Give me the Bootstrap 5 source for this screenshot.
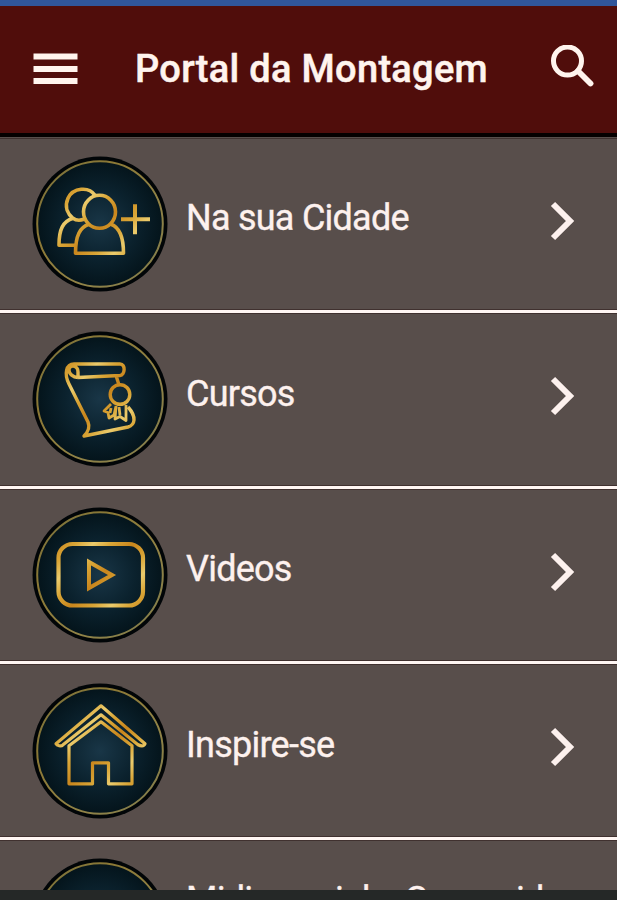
<!DOCTYPE html>
<html lang="pt-BR">
<head>
<meta charset="utf-8">
<meta name="viewport" content="width=device-width, initial-scale=1">
<title>Portal da Montagem</title>
<link href="https://cdn.jsdelivr.net/npm/bootstrap@5.3.0/dist/css/bootstrap.min.css" rel="stylesheet">
<style>
body { background: #584e4b; font-family: Roboto, sans-serif; color: #fdf1ee; }
.app-shell { height: 900px; }
.status-strip { height: 6px; background: #30569b; }
.app-bar { height: 131px; background: #500d0b; border-bottom: 4px solid #050000; padding: 0 23px 4px 33px; }
.app-title { font-size: 38px; font-weight: 500; line-height: 44px; letter-spacing: .3px; color: #fff4ee; margin: 2px 0 0 57px; white-space: nowrap; -webkit-text-stroke: .5px #fff4ee; }
.menu-list { --bs-list-group-bg: #584e4b; --bs-list-group-color: #fdf1ee; padding-top: .5px; }
.menu-list > .menu-entry { height: 175.6px; padding: 0 41px 0 32px; border: 0; border-bottom: 3px solid #fff6f3; box-shadow: inset 0 -1px #40312f, inset 0 1px #40312f; }
.menu-entry .entry-label { font-size: 36px; line-height: 44px; margin: 58.6px 0 0 18px; letter-spacing: -.75px; white-space: nowrap; -webkit-text-stroke: .35px #fdf1ee; }
.menu-entry .label-two-line { margin-top: 38px; }
.entry-icon { width: 136px; height: 136px; margin-top: 18.4px; }
.entry-arrow { width: 26px; height: 42px; margin-top: 62.2px; }
.bottom-strip { height: 10px; background: #252827; }
</style>
</head>
<body>
<svg width="0" height="0" class="position-absolute" aria-hidden="true">
  <defs>
    <radialGradient id="night"><stop offset="0" stop-color="#193647"/><stop offset=".55" stop-color="#0b222e"/><stop offset="1" stop-color="#04141b"/></radialGradient>
    <linearGradient id="gold" gradientUnits="userSpaceOnUse" x1="28" y1="30" x2="48" y2="50" spreadMethod="reflect"><stop offset="0" stop-color="#c9861d"/><stop offset=".55" stop-color="#d9a536"/><stop offset="1" stop-color="#ebcb6c"/></linearGradient>
    <linearGradient id="ring" x1="0" y1="0" x2="1" y2="1"><stop offset="0" stop-color="#77713e"/><stop offset=".3" stop-color="#8b7835"/><stop offset=".65" stop-color="#918347"/><stop offset="1" stop-color="#7d7a4b"/></linearGradient>
    <g id="disc"><circle cx="68" cy="68" r="67.5" fill="#010507"/><circle cx="68" cy="68" r="62.8" fill="url(#night)" stroke="url(#ring)" stroke-width="2"/></g>
    <path id="chevron" d="M3 4 20 21 3 38" fill="none" stroke="#fdf1ee" stroke-width="6"/>
  </defs>
</svg>
<div class="app-shell d-flex flex-column overflow-hidden">
  <div class="status-strip flex-shrink-0"></div>
  <header class="app-bar d-flex align-items-center flex-shrink-0">
    <svg width="45" height="34" viewBox="0 0 45 34" role="img" aria-label="Menu"><path d="M.5 5.500H44.5M.5 18H44.5M.5 30H44.5" stroke="#fff4ee" stroke-width="5.8"/></svg>
    <h1 class="app-title">Portal da Montagem</h1>
    <svg class="ms-auto" width="44" height="46" viewBox="0 0 44 46" role="img" aria-label="Buscar"><circle cx="17.500" cy="16" r="14" fill="none" stroke="#fff4ee" stroke-width="5"/><path d="M28 26 40.500 38.500" stroke="#fff4ee" stroke-width="5.8" stroke-linecap="round"/></svg>
  </header>
  <main class="menu-list list-group list-group-flush flex-grow-1 overflow-hidden">
    <a class="menu-entry list-group-item d-flex align-items-start flex-shrink-0" href="#">
      <svg class="entry-icon flex-shrink-0" viewBox="0 0 136 136"><use href="#disc"/><g transform="translate(0 1.3)" fill="none" stroke="url(#gold)" stroke-width="3.6" stroke-linejoin="round"><path d="M63 38C57 29 41 30 36 41C32 50 36 57 41 61M41 61C31 64 27 72 27 88H43M41 61C45 64 49 63 52 62"/><ellipse cx="67.5" cy="54.5" rx="16" ry="16.5"/><path d="M57 67C48 70 43.5 78 43.5 96H91.500C91.500 78 87 70 79 67"/><path d="M103 47V77M89 62H118" stroke-width="4"/></g></svg>
      <span class="entry-label">Na sua Cidade</span>
      <svg class="entry-arrow ms-auto flex-shrink-0" viewBox="0 0 26 42"><use href="#chevron"/></svg>
    </a>
    <a class="menu-entry list-group-item d-flex align-items-start flex-shrink-0" href="#">
      <svg class="entry-icon flex-shrink-0" viewBox="0 0 136 136"><use href="#disc"/><g fill="none" stroke="url(#gold)" stroke-width="3.4" stroke-linejoin="round"><path d="M46 46.500 88 44.500C93 44 94 33 88 33H42C34 33 32 43 37 53L56 91C58 96 56 101 52 105L96 96C103 94 105 86 96 76M46 46.500V41C46 34 37 33 37 39C37 43 41 46 46 46.500M84.500 46 87 54"/><circle cx="88" cy="63.500" r="9.800"/><g stroke-width="2.800"><path d="M79 73 72 80 76 81.500 77 87 82 84 84 75M84 75 83 88 88 85.500 94 89.500 94 74M87 76 88 84M79 77 78 82"/></g></g></svg>
      <span class="entry-label">Cursos</span>
      <svg class="entry-arrow ms-auto flex-shrink-0" viewBox="0 0 26 42"><use href="#chevron"/></svg>
    </a>
    <a class="menu-entry list-group-item d-flex align-items-start flex-shrink-0" href="#">
      <svg class="entry-icon flex-shrink-0" viewBox="0 0 136 136"><use href="#disc"/><g fill="none" stroke="url(#gold)" stroke-width="4.2"><rect x="26.500" y="37" width="84.500" height="61.500" rx="14"/><path d="M57 55V81L80 68Z" stroke-width="4"/></g></svg>
      <span class="entry-label">Videos</span>
      <svg class="entry-arrow ms-auto flex-shrink-0" viewBox="0 0 26 42"><use href="#chevron"/></svg>
    </a>
    <a class="menu-entry list-group-item d-flex align-items-start flex-shrink-0" href="#">
      <svg class="entry-icon flex-shrink-0" viewBox="0 0 136 136"><use href="#disc"/><g transform="translate(0 .8)" fill="none" stroke="url(#gold)" stroke-width="3.2" stroke-linejoin="round"><path d="M24 60 69 22 113 60C112 63 108 62 106 61L69 31 31 61C29 63 25 62 24 60Z"/><path d="M37 62V100H60.500V79H76.500V100H100V62L69 38Z"/></g></svg>
      <span class="entry-label">Inspire-se</span>
      <svg class="entry-arrow ms-auto flex-shrink-0" viewBox="0 0 26 42"><use href="#chevron"/></svg>
    </a>
    <a class="menu-entry list-group-item d-flex align-items-start flex-shrink-0" href="#">
      <svg class="entry-icon flex-shrink-0" viewBox="0 0 136 136"><use href="#disc"/></svg>
      <span class="entry-label label-two-line">Midia social e Comunida</span>
    </a>
  </main>
  <footer class="bottom-strip flex-shrink-0"></footer>
</div>
<script src="https://cdn.jsdelivr.net/npm/bootstrap@5.3.0/dist/js/bootstrap.bundle.min.js"></script>
</body>
</html>
